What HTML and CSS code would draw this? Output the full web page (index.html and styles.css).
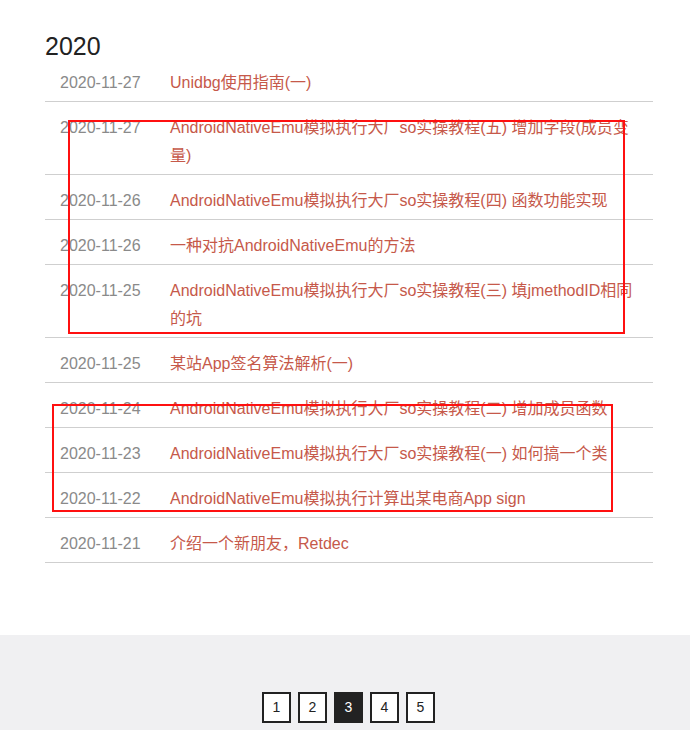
FILE: index.html
```html
<!DOCTYPE html>
<html lang="zh-CN">
<head>
<meta charset="utf-8">
<title>Archive 2020</title>
<link rel="stylesheet" href="styles.css">
</head>
<body>
<main class="archive">
  <h2 class="year">2020</h2>
  <ul class="posts">
    <li class="post"><span class="date">2020-11-27</span><a class="title" href="#">Unidbg使用指南(一)</a></li>
    <li class="post"><span class="date">2020-11-27</span><a class="title" href="#">AndroidNativeEmu模拟执行大厂so实操教程(五) 增加字段(成员变量)</a></li>
    <li class="post"><span class="date">2020-11-26</span><a class="title" href="#">AndroidNativeEmu模拟执行大厂so实操教程(四) 函数功能实现</a></li>
    <li class="post"><span class="date">2020-11-26</span><a class="title" href="#">一种对抗AndroidNativeEmu的方法</a></li>
    <li class="post"><span class="date">2020-11-25</span><a class="title" href="#">AndroidNativeEmu模拟执行大厂so实操教程(三) 填jmethodID相同的坑</a></li>
    <li class="post"><span class="date">2020-11-25</span><a class="title" href="#">某站App签名算法解析(一)</a></li>
    <li class="post"><span class="date">2020-11-24</span><a class="title" href="#">AndroidNativeEmu模拟执行大厂so实操教程(二) 增加成员函数</a></li>
    <li class="post"><span class="date">2020-11-23</span><a class="title" href="#">AndroidNativeEmu模拟执行大厂so实操教程(一) 如何搞一个类</a></li>
    <li class="post"><span class="date">2020-11-22</span><a class="title" href="#">AndroidNativeEmu模拟执行计算出某电商App sign</a></li>
    <li class="post"><span class="date">2020-11-21</span><a class="title" href="#">介绍一个新朋友，Retdec</a></li>
  </ul>
  <div class="mark mark-a"></div>
  <div class="mark mark-b"></div>
</main>
<footer class="pager-wrap">
  <nav class="pager">
    <a class="page" href="#">1</a>
    <a class="page" href="#">2</a>
    <span class="page current">3</span>
    <a class="page" href="#">4</a>
    <a class="page" href="#">5</a>
  </nav>
</footer>
</body>
</html>
```
FILE: styles.css
```css
html, body {
  margin: 0;
  padding: 0;
  background: #fff;
  font-family: "Liberation Sans", Arial, "Noto Sans CJK SC", sans-serif;
}

.archive {
  position: relative;
  width: 608px;
  margin: 0 0 0 45px;
  padding: 36px 0 72px;
}

.year {
  margin: 0;
  font-size: 25px;
  font-weight: normal;
  color: #222;
  line-height: 21px;
}

.posts {
  list-style: none;
  margin: 0;
  padding: 0;
}

.post {
  display: flex;
  padding: 12px 0 4px;
  border-bottom: 1px solid #cfcfcf;
  font-size: 16px;
  line-height: 28px;
}

.date {
  flex: 0 0 110px;
  padding-left: 15px;
  color: #8a8a8a;
}

.title {
  flex: 1;
  color: #c6594a;
  text-decoration: none;
  padding-right: 16px;
}

.mark {
  position: absolute;
  border: 2px solid #ff1010;
  pointer-events: none;
}

.mark-a {
  left: 23px;
  top: 120px;
  width: 553px;
  height: 210px;
}

.mark-b {
  left: 7px;
  top: 404px;
  width: 557px;
  height: 104px;
}

.pager-wrap {
  background: #f0f0f2;
  padding: 57px 0 40px;
}

.pager {
  display: flex;
  justify-content: center;
  gap: 7px;
  padding-left: 7px;
}

.page {
  box-sizing: border-box;
  width: 29px;
  height: 31px;
  border: 2px solid #222;
  background: #fff;
  color: #222;
  font-size: 14px;
  line-height: 27px;
  text-align: center;
  text-decoration: none;
}

.page.current {
  background: #222;
  color: #fff;
}
```
